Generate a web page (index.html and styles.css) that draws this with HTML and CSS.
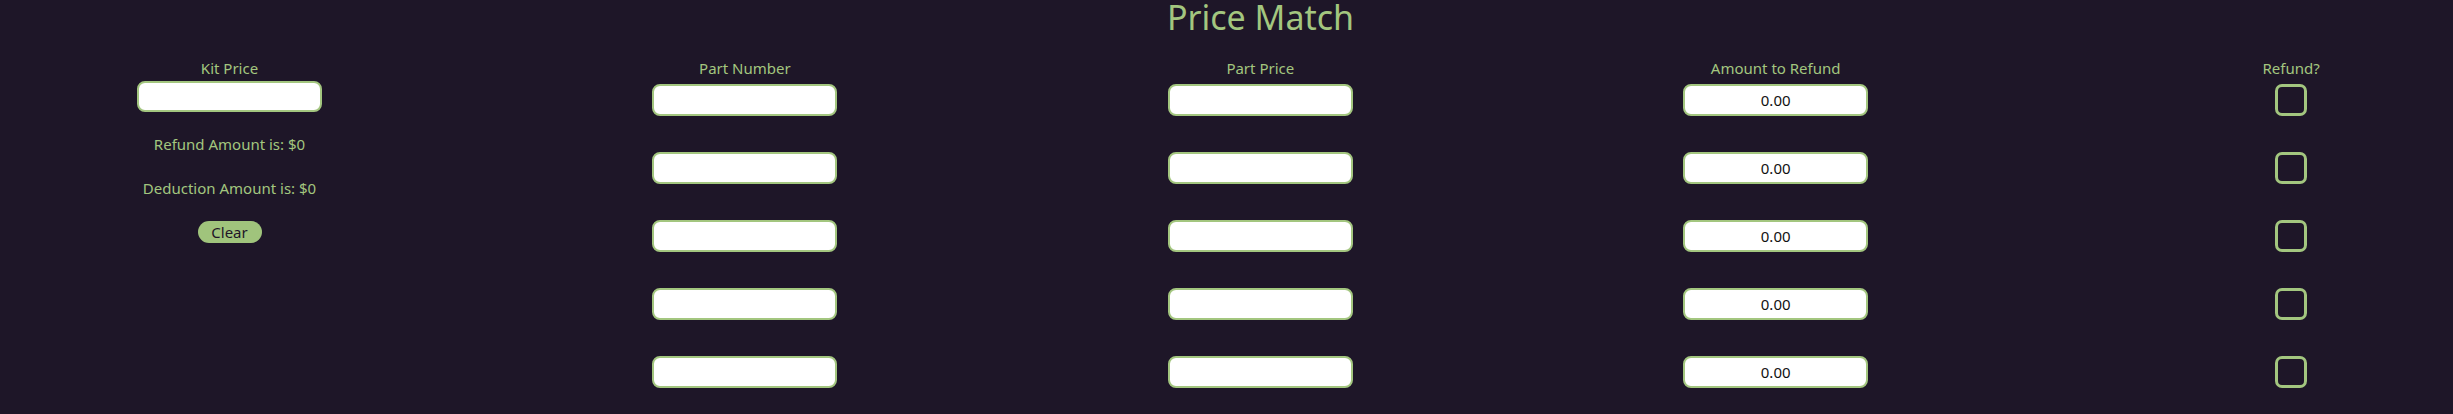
FILE: index.html
```html
<!DOCTYPE html>
<html>
<head>
<meta charset="utf-8">
<title>Price Match</title>
<link rel="stylesheet" href="styles.css">
</head>
<body>
<header class="header">
  <h1 class="title">Price Match</h1>
</header>
<main class="grid">
  <section class="col">
    <label class="label">Kit Price</label>
    <input class="field kit-field" type="text">
    <p class="info info-first">Refund Amount is: $0</p>
    <p class="info">Deduction Amount is: $0</p>
    <button class="clear">Clear</button>
  </section>
  <section class="col">
    <label class="label">Part Number</label>
    <input class="field" type="text">
    <input class="field" type="text">
    <input class="field" type="text">
    <input class="field" type="text">
    <input class="field" type="text">
  </section>
  <section class="col">
    <label class="label">Part Price</label>
    <input class="field" type="text">
    <input class="field" type="text">
    <input class="field" type="text">
    <input class="field" type="text">
    <input class="field" type="text">
  </section>
  <section class="col">
    <label class="label">Amount to Refund</label>
    <input class="field amount" type="text" value="0.00">
    <input class="field amount" type="text" value="0.00">
    <input class="field amount" type="text" value="0.00">
    <input class="field amount" type="text" value="0.00">
    <input class="field amount" type="text" value="0.00">
  </section>
  <section class="col">
    <label class="label">Refund?</label>
    <span class="check"></span>
    <span class="check"></span>
    <span class="check"></span>
    <span class="check"></span>
    <span class="check"></span>
  </section>
</main>
</body>
</html>
```
FILE: styles.css
```css
html, body {
  margin: 0;
  padding: 0;
  background: #1e1628;
  height: 100%;
  overflow: hidden;
}
body {
  font-family: "Noto Sans", "Open Sans", sans-serif;
  color: #a3c67f;
}
.header {
  padding-left: 68px;
  text-align: center;
}
.title {
  margin: 0;
  font-size: 34px;
  font-weight: 400;
  line-height: 34px;
  color: #a3c67f;
}
.grid {
  display: grid;
  grid-template-columns: repeat(5, 200px);
  column-gap: 315.4px;
  padding-left: 129.5px;
  margin-top: 24px;
}
.col {
  display: flex;
  flex-direction: column;
  align-items: center;
}
.label {
  font-size: 15px;
  line-height: 20px;
  height: 20px;
  margin-bottom: 6px;
}
.field {
  box-sizing: border-box;
  width: 185px;
  height: 32px;
  margin: 0 0 36px 0;
  border: 2px solid #a3c67f;
  border-radius: 8px;
  background: #ffffff;
  padding: 0 6px;
  font-family: "Noto Sans", "Open Sans", sans-serif;
  font-size: 15px;
  color: #111111;
  outline: none;
}
.kit-field {
  height: 31px;
  margin: -3px 0 0 0;
}
.amount {
  text-align: center;
}
.info {
  margin: 22px 0 0 0;
  font-size: 15px;
  line-height: 20px;
}
.info + .info {
  margin-top: 24px;
}
.clear {
  margin-top: 23px;
  width: 64px;
  height: 22px;
  padding: 0;
  border: none;
  border-radius: 11px;
  background: #a0c47c;
  color: #1e1628;
  font-family: "Noto Sans", "Open Sans", sans-serif;
  font-size: 15px;
  line-height: 22px;
}
.check {
  box-sizing: border-box;
  display: block;
  width: 32px;
  height: 32px;
  margin-bottom: 36px;
  border: 3px solid #a3c67f;
  border-radius: 7px;
}
```
